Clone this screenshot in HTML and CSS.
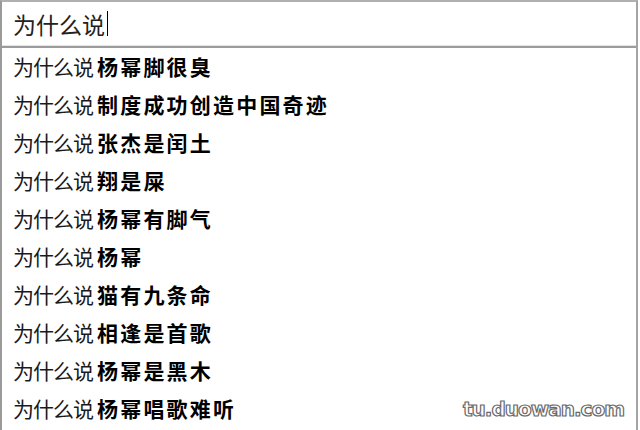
FILE: index.html
```html
<!DOCTYPE html>
<html lang="zh">
<head>
<meta charset="utf-8">
<link rel="stylesheet" href="styles.css">
</head>
<body>
<div class="box">
  <div class="input"><span class="query">为什么说</span><span class="caret"></span></div>
  <ul class="list">
    <li>为什么说<b>杨幂脚很臭</b></li>
    <li>为什么说<b>制度成功创造中国奇迹</b></li>
    <li>为什么说<b>张杰是闰土</b></li>
    <li>为什么说<b>翔是屎</b></li>
    <li>为什么说<b>杨幂有脚气</b></li>
    <li>为什么说<b>杨幂</b></li>
    <li>为什么说<b>猫有九条命</b></li>
    <li>为什么说<b>相逢是首歌</b></li>
    <li>为什么说<b>杨幂是黑木</b></li>
    <li>为什么说<b>杨幂唱歌难听</b></li>
  </ul>
  <div class="mark">tu.duowan.com</div>
</div>
</body>
</html>
```
FILE: styles.css
```css
html, body {
  margin: 0;
  padding: 0;
  background: #fff;
}
.box {
  position: relative;
  width: 634px;
  height: 428px;
  border-top: 2px solid #b0b0b0;
  border-left: 2px solid #9a9a9a;
  border-right: 2px solid #a4a4a4;
  font-family: "Noto Sans CJK SC", "Liberation Sans", sans-serif;
  color: #111;
}
.input {
  height: 43px;
  border-bottom: 1px solid #e4e4e4;
  box-shadow: 0 2px 0 #9c9c9c;
  display: flex;
  align-items: center;
  padding-left: 11px;
  font-size: 23px;
  color: #222;
}
.query {
  line-height: 26px;
}
.caret {
  display: inline-block;
  width: 0;
  height: 25px;
  border-left: 1px solid #000;
  margin-left: 2px;
}
.list {
  list-style: none;
  margin: 2px 0 0;
  padding: 0;
}
.list li {
  height: 38px;
  line-height: 36px;
  padding-left: 11px;
  font-size: 21px;
  letter-spacing: -1px;
  white-space: nowrap;
  color: #1a1a1a;
}
.list b {
  font-weight: 700;
  color: #000;
  margin-left: 4px;
  letter-spacing: 2.2px;
}
.mark {
  position: absolute;
  right: 12px;
  bottom: 9px;
  font-family: "DejaVu Sans", sans-serif;
  font-weight: 700;
  font-size: 20px;
  letter-spacing: -1px;
  color: #fff;
  -webkit-text-stroke: 1.2px #6a6a6a;
}
```
